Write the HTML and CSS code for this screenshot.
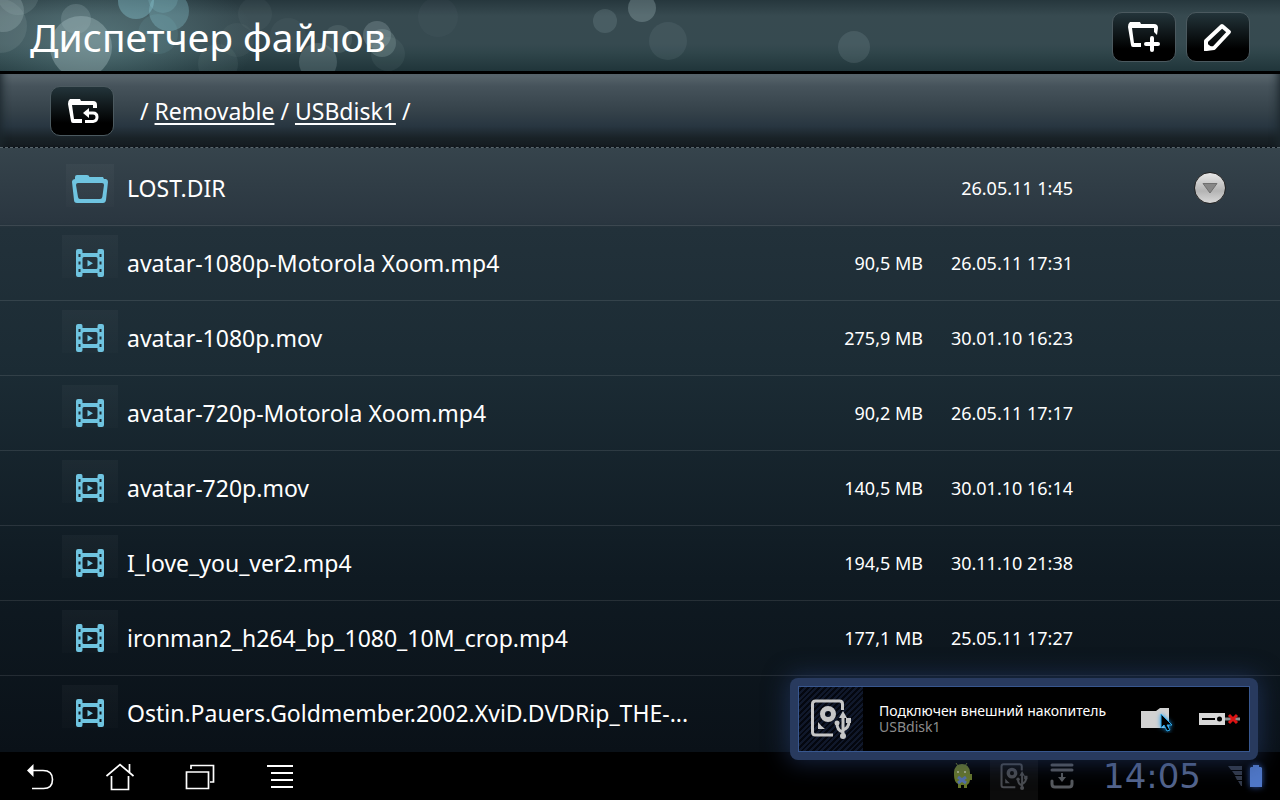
FILE: index.html
```html
<!DOCTYPE html>
<html lang="ru">
<head>
    <meta charset="UTF-8">
    <meta name="viewport" content="width=device-width, initial-scale=1.0">
    <title>Диспетчер файлов</title>
    <link rel="stylesheet" href="styles.css">
</head>
<body>

    <!-- shared icons -->
    <svg class="defs" aria-hidden="true">
        <symbol id="film" viewBox="0 0 28 28">
            <path fill="#6fc4e0" fill-rule="evenodd" d="M2 0h3q1.500 0 1.500 2v2h15V2q0-2 1.500-2h3q2 0 2 2v24q0 2-2 2h-3q-1.500 0-1.500-2v-2h-15v2q0 2-1.500 2H2q-2 0-2-2V2q0-2 2-2zM8 8q-1.500 0-1.500 1.500v9Q6.500 20 8 20h12q1.500 0 1.500-1.500v-9Q21.500 8 20 8zM2.500 5v3h2V5zM2.500 12.500v3h2v-3zM2.500 20v3h2v-3zM23.500 5v3h2V5zM23.500 12.500v3h2v-3zM23.500 20v3h2v-3z"/>
            <path fill="#6fc4e0" d="M11.500 11v6.500l5.500-3.200z"/>
        </symbol>
        <symbol id="disk" viewBox="0 0 40 40">
            <g fill="none" stroke="currentColor" stroke-width="3">
                <path d="M31.500 11V5q0-3-3-3h-24q-3 0-3 3v28q0 3 3 3H22"/>
                <circle cx="17" cy="15" r="5.500" stroke-width="5"/>
                <path d="M32 37V17M32 33q-6-1-6-9M32 31q6-2 6-9"/>
            </g>
            <path fill="currentColor" d="M28 19L32 12l4 7zM35 19h5v5h-5zM7 23v7h7q-4-3-7-7z"/>
            <circle cx="26" cy="24" r="2.500" fill="currentColor"/>
            <circle cx="32" cy="37" r="3" fill="currentColor"/>
        </symbol>
    </svg>

    <header class="header">
        <svg class="bokeh" width="900" height="71" aria-hidden="true">
            <defs>
                <radialGradient id="glow">
                    <stop offset="0" stop-color="#78a4a8" stop-opacity=".45"/>
                    <stop offset="1" stop-color="#78a4a8" stop-opacity="0"/>
                </radialGradient>
            </defs>
            <ellipse cx="95" cy="40" rx="160" ry="80" fill="url(#glow)"/>
            <g fill="#a9bfc2">
                <circle cx="3" cy="11" r="21" opacity=".28"/>
                <circle cx="0" cy="26" r="27" opacity=".14"/>
                <circle cx="18" cy="-6" r="21" opacity=".16"/>
                <circle cx="81" cy="47" r="31" opacity=".38"/>
                <circle cx="76" cy="19" r="15" opacity=".22"/>
                <circle cx="218" cy="64" r="20" opacity=".08"/>
                <circle cx="237" cy="40" r="17" opacity=".06"/>
                <circle cx="255" cy="14" r="17" opacity=".06"/>
                <circle cx="288" cy="36" r="18" opacity=".06"/>
                <circle cx="318" cy="62" r="19" opacity=".22"/>
                <circle cx="338" cy="39" r="14" opacity=".14"/>
                <circle cx="377" cy="35" r="14" opacity=".26"/>
                <circle cx="382" cy="43" r="14" opacity=".24"/>
                <circle cx="388" cy="54" r="17" opacity=".08"/>
                <circle cx="438" cy="17" r="20" opacity=".04"/>
                <circle cx="605" cy="21" r="12" opacity=".17"/>
                <circle cx="642" cy="8" r="14" opacity=".3"/>
                <circle cx="668" cy="41" r="19" opacity=".1"/>
                <circle cx="854" cy="47" r="16" opacity=".15"/>
            </g>
            <g fill="#8ccbd8">
                <circle cx="136" cy="1" r="18" opacity=".38"/>
                <circle cx="169" cy="11" r="20" opacity=".32"/>
                <circle cx="163" cy="-2" r="15" opacity=".2"/>
                <circle cx="158" cy="34" r="20" opacity=".1"/>
            </g>
        </svg>
        <h1>Диспетчер файлов</h1>
        <div class="actions">
            <button class="tool" type="button" aria-label="Новая папка">
                <svg width="34" height="32" viewBox="0 0 34 32">
                    <path fill="#fff" d="M3 1h10l1 2h13q4 0 4 4l-1 7-3-3V7H5l2 15h7v4H6q-2 0-2-2L1 6q-.5-3 2-5z"/>
                    <path stroke="#fff" stroke-width="4" stroke-linecap="round" d="M25 17v12M19 23h12"/>
                </svg>
            </button>
            <button class="tool" type="button" aria-label="Изменить">
                <svg width="34" height="32" viewBox="0 0 34 32">
                    <path fill="none" stroke="#fff" stroke-width="4" stroke-linejoin="round" d="M5 20L21 5l7 6L13 27l-8 1z"/>
                    <path fill="#fff" d="M3 20l10 8-10 2z"/>
                </svg>
            </button>
        </div>
    </header>

    <nav class="path">
        <button class="tool" type="button" aria-label="Вверх">
            <svg width="34" height="32" viewBox="0 0 34 32">
                <path fill="#fff" d="M5 4h10l1 2h12q4 0 4 4v3h-4v-3H7l2 14h8v4H8q-2 0-2-2L3 9q-.5-3 2-5z"/>
                <path fill="#fff" d="M18 18l6-5v10z"/>
                <path fill="none" stroke="#fff" stroke-width="3" d="M23 18h5q4 0 4 4t-4 4.500h-8"/>
            </svg>
        </button>
        <p>/ <a href="#">Removable</a> / <a href="#">USBdisk1</a> /</p>
    </nav>

    <main class="files">
        <table>
            <colgroup>
                <col class="col-icon">
                <col>
                <col class="col-size">
                <col class="col-date">
                <col class="col-menu">
            </colgroup>
            <tbody>
                <tr>
                    <td><span class="tile folder"><svg width="36" height="30" viewBox="0 0 36 30"><path fill="#6fc4e0" fill-rule="evenodd" d="M3 4q0-2 2-2h10q2 0 2.500 2H31l1 2h2q2 .5 2 3l-2 18q-.5 3-3 3H5q-3 0-3-3L0 9q-.2-2.500 3-3zM6 10q-2 0-2 2l2 12q.3 2 2 2h20q2 0 2.300-2l1.700-12q0-2-2-2z"/></svg></span></td>
                    <td class="name">LOST.DIR</td>
                    <td class="meta"></td>
                    <td class="meta">26.05.11 1:45</td>
                    <td class="menu">
                        <button type="button" class="more" aria-label="Меню">
                            <svg width="16" height="12" viewBox="0 0 16 12"><path fill="#888" stroke="#707070" d="M1 1.500h14L8 11z"/></svg>
                        </button>
                    </td>
                </tr>
                <tr>
                    <td><span class="tile"><svg width="28" height="28"><use href="#film"/></svg></span></td>
                    <td class="name">avatar-1080p-Motorola Xoom.mp4</td>
                    <td class="meta">90,5 MB</td>
                    <td class="meta">26.05.11 17:31</td>
                    <td></td>
                </tr>
                <tr>
                    <td><span class="tile"><svg width="28" height="28"><use href="#film"/></svg></span></td>
                    <td class="name">avatar-1080p.mov</td>
                    <td class="meta">275,9 MB</td>
                    <td class="meta">30.01.10 16:23</td>
                    <td></td>
                </tr>
                <tr>
                    <td><span class="tile"><svg width="28" height="28"><use href="#film"/></svg></span></td>
                    <td class="name">avatar-720p-Motorola Xoom.mp4</td>
                    <td class="meta">90,2 MB</td>
                    <td class="meta">26.05.11 17:17</td>
                    <td></td>
                </tr>
                <tr>
                    <td><span class="tile"><svg width="28" height="28"><use href="#film"/></svg></span></td>
                    <td class="name">avatar-720p.mov</td>
                    <td class="meta">140,5 MB</td>
                    <td class="meta">30.01.10 16:14</td>
                    <td></td>
                </tr>
                <tr>
                    <td><span class="tile"><svg width="28" height="28"><use href="#film"/></svg></span></td>
                    <td class="name">I_love_you_ver2.mp4</td>
                    <td class="meta">194,5 MB</td>
                    <td class="meta">30.11.10 21:38</td>
                    <td></td>
                </tr>
                <tr>
                    <td><span class="tile"><svg width="28" height="28"><use href="#film"/></svg></span></td>
                    <td class="name">ironman2_h264_bp_1080_10M_crop.mp4</td>
                    <td class="meta">177,1 MB</td>
                    <td class="meta">25.05.11 17:27</td>
                    <td></td>
                </tr>
                <tr>
                    <td><span class="tile"><svg width="28" height="28"><use href="#film"/></svg></span></td>
                    <td class="name">Ostin.Pauers.Goldmember.2002.XviD.DVDRip_THE-...</td>
                    <td class="meta"></td>
                    <td class="meta"></td>
                    <td></td>
                </tr>
            </tbody>
        </table>
    </main>

    <footer class="system">
        <div class="keys">
            <button type="button" aria-label="Назад">
                <svg width="28" height="26" viewBox="0 0 28 26"><path fill="#fff" d="M1 6.500L7.500 0v13z"/><path fill="none" stroke="#fff" stroke-width="1.600" d="M6 6.500h11q9.500 0 9.500 9t-9 9H6"/></svg>
            </button>
            <button type="button" aria-label="Домой">
                <svg width="28" height="28" viewBox="0 0 28 28"><path fill="none" stroke="#fff" stroke-width="1.700" d="M.5 13L14 1.500 27.500 13M23.500 9V1M5.500 13v13.500h17V13"/></svg>
            </button>
            <button type="button" aria-label="Недавние">
                <svg width="30" height="26" viewBox="0 0 30 26"><path fill="none" stroke="#fff" stroke-width="1.700" d="M1.500 8h22v16.500h-22zM6 5V1.500h22.500V18H25"/></svg>
            </button>
            <button type="button" aria-label="Меню">
                <svg width="26" height="24" viewBox="0 0 26 24"><path stroke="#fff" stroke-width="2" d="M0 1h26M4 8h22M4 15h22M4 22h22"/></svg>
            </button>
        </div>
        <div class="status">
            <svg class="robot" width="20" height="26" viewBox="0 0 20 26">
                <path stroke="#66762a" d="M5 3L3 0M12 3l2-3"/>
                <path fill="#66762a" d="M1 12V9q1-8 8-8t8 8v2h2v6h-2q0 3-3 5v3h-3v-3H8v3H5v-4q-4-2-4-9z"/>
                <path fill="#a3ab80" d="M4 8h2v2H4zM11 8h2v2h-2z"/>
                <path stroke="#536fa8" stroke-width="3" d="M5 14l8 6M13 14l-8 6"/>
            </svg>
            <span class="drive"><svg width="28" height="27"><use href="#disk"/></svg></span>
            <svg class="download" width="24" height="26" viewBox="0 0 24 26"><path fill="none" stroke="#56595d" stroke-width="3" stroke-linecap="round" d="M2 2h20M2 7h20M2 18v3q0 3 3 3h14q3 0 3-3v-3"/><path fill="none" stroke="#56595d" stroke-width="2" d="M12 10v6"/><path fill="#56595d" d="M8 14h8l-4 5z"/></svg>
            <time class="clock">14:05</time>
            <svg class="signal" width="14" height="20" viewBox="0 0 14 20"><path fill="#333a49" d="M0 0h14v4H3zM4 5h10v4H7zM7 10h7v4h-5zM10 15h4v5h-1z"/></svg>
            <svg class="battery" width="12" height="22" viewBox="0 0 12 22"><path fill="#5078c8" d="M3 0h6v2h2l1 1v19H0V3l1-1h2z"/></svg>
        </div>
    </footer>

    <section class="toast">
        <div class="toast-body">
            <div class="toast-icon"><svg width="40" height="40"><use href="#disk"/></svg></div>
            <div class="toast-text">
                <p class="title">Подключен внешний накопитель</p>
                <p class="volume">USBdisk1</p>
            </div>
            <button type="button" class="open" aria-label="Открыть">
                <svg width="34" height="28" viewBox="0 0 34 28">
                    <path fill="#d2d2d2" d="M0 6h15l4-3h9v20H0z"/>
                    <path class="cursor" fill="#000" stroke="#2aa7ea" d="M20 9v14l3-3 3 6 3-1-3-5h5z"/>
                </svg>
            </button>
            <button type="button" class="eject" aria-label="Извлечь">
                <svg width="42" height="14" viewBox="0 0 42 14">
                    <path fill="#d8d8d8" d="M0 1h26v12H0z"/>
                    <path stroke="#8b8b8b" stroke-width="3" d="M26 7h15"/>
                    <path stroke="#000" stroke-width="2" d="M3 7h13"/>
                    <circle cx="20.500" cy="7" r="2.500"/>
                    <path stroke="#dc1313" stroke-width="3" d="M30 3l8 8M38 3l-8 8"/>
                </svg>
            </button>
        </div>
    </section>

</body>
</html>
```
FILE: styles.css
```css
* {
    box-sizing: border-box;
}

body {
    margin: 0;
    height: 100vh;
    display: flex;
    flex-direction: column;
    position: relative;
    overflow: hidden;
    background: #000;
    color: #fff;
    font-family: "Noto Sans", "Open Sans", sans-serif;
}

h1, p {
    margin: 0;
    font-weight: normal;
}

button {
    padding: 0;
    border: 0;
    background: none;
    color: inherit;
    display: flex;
    align-items: center;
    justify-content: center;
}

.defs {
    position: absolute;
    width: 0;
    height: 0;
}

/* Header */
.header {
    flex: none;
    height: 74px;
    padding: 2px 30px 0;
    display: flex;
    align-items: center;
    justify-content: space-between;
    position: relative;
    overflow: hidden;
    border-bottom: 3px solid #000;
    background: linear-gradient(#26373d, #374a50 16px, #364a50 44px, #30464b 52px, #20353a);
}

.bokeh {
    position: absolute;
    left: 0;
    top: 0;
}

.header h1 {
    position: relative;
    font-size: 39px;
    line-height: 60px;
}

.actions {
    display: flex;
    gap: 10px;
}

.tool {
    width: 64px;
    height: 50px;
    border: 1px solid #4b595f;
    border-radius: 10px;
    background: linear-gradient(#23343a, #000 75%);
}

/* Path */
.path {
    flex: none;
    height: 73px;
    padding: 0 50px;
    display: flex;
    align-items: center;
    gap: 26px;
    background: linear-gradient(#5a676e, #46535b 12px, #35424a 37px, #283641 52px, #192227 64px, #141b20);
    box-shadow: inset 10px 0 8px -8px #1c272d, inset -10px 0 8px -8px #1c272d;
}

.path p {
    font-size: 23px;
    line-height: 32px;
}

.path a {
    color: #fff;
    text-underline-offset: 3px;
    text-decoration-thickness: 2px;
    text-decoration-skip-ink: none;
}

/* File list */
.files {
    flex: 1;
    min-height: 0;
    overflow: hidden;
    padding-top: 3px;
    border-top: 1px dashed #59666d;
    background: linear-gradient(#36444c, #2a3640 75px, #22313a 80px, #1b2b34 225px, #0f1a22 430px, #0a1118);
}

.files table {
    width: 100%;
    table-layout: fixed;
    border-collapse: separate;
    border-spacing: 0;
}

.col-icon {
    width: 127px;
}

.col-size {
    width: 150px;
}

.col-date {
    width: 150px;
}

.col-menu {
    width: 207px;
}

.files td {
    height: 75px;
    padding: 0;
    border-bottom: 1px solid rgba(255, 255, 255, 0.1);
    white-space: nowrap;
}

.files tr:last-child td {
    border-bottom-color: transparent;
}

.tile {
    display: flex;
    align-items: center;
    justify-content: center;
    width: 56px;
    height: 56px;
    margin-left: 62px;
    background: linear-gradient(rgba(255, 255, 255, 0.03), rgba(255, 255, 255, 0.01) 43px, transparent 43px);
}

.tile.folder {
    width: 48px;
    height: 48px;
    margin-left: 66px;
}

.files .name {
    font-size: 23px;
}

.files .meta {
    font-size: 18px;
    text-align: right;
}

.more {
    width: 32px;
    height: 32px;
    margin-left: auto;
    margin-right: 54px;
    border: 1px solid #222;
    border-radius: 50%;
    background: linear-gradient(#e8e8e8, #b4b4b4 60%, #d8d8d8);
}

/* System bar */
.system {
    flex: none;
    height: 48px;
    display: flex;
    justify-content: space-between;
    background: #000;
}

.keys {
    display: flex;
    padding-top: 2px;
}

.keys button {
    width: 80px;
}

.status {
    display: flex;
    align-items: center;
    padding-right: 18px;
}

.robot {
    margin-right: 17px;
}

.drive {
    display: flex;
    align-items: center;
    justify-content: center;
    width: 48px;
    height: 48px;
    background: #0c0c0c;
    color: #4a4c50;
}

.download {
    margin: 0 16px 0 12px;
}

.clock {
    width: 124px;
    text-align: center;
    color: #53648c;
    font-family: "DejaVu Sans", sans-serif;
    font-size: 34px;
    line-height: 48px;
}

.signal {
    margin: 0 8px 0 14px;
}

.battery {
    filter: drop-shadow(0 0 3px #2f55a8);
}

/* Notification */
.toast {
    position: absolute;
    right: 22px;
    bottom: 40px;
    width: 468px;
    padding: 8px;
    border-radius: 8px;
    background: #283a5e;
    box-shadow: 0 0 24px 2px rgba(38, 62, 112, 0.6);
}

.toast-body {
    display: flex;
    align-items: center;
    height: 66px;
    background: #000;
    border: 1px solid #38578f;
}

.toast-icon {
    display: flex;
    align-items: center;
    justify-content: center;
    width: 64px;
    height: 64px;
    color: #c6c6c6;
    background: repeating-linear-gradient(135deg, #10182b 0 2px, #04070f 2px 4px);
}

.toast-text {
    flex: 1;
    padding-left: 16px;
}

.title,
.volume {
    font-size: 14px;
    line-height: 16px;
}

.volume {
    color: #8c8c8c;
}

.open {
    margin-right: 24px;
}

.cursor {
    filter: drop-shadow(0 0 2px #1d9df0);
}

.eject {
    margin-right: 8px;
}
```
